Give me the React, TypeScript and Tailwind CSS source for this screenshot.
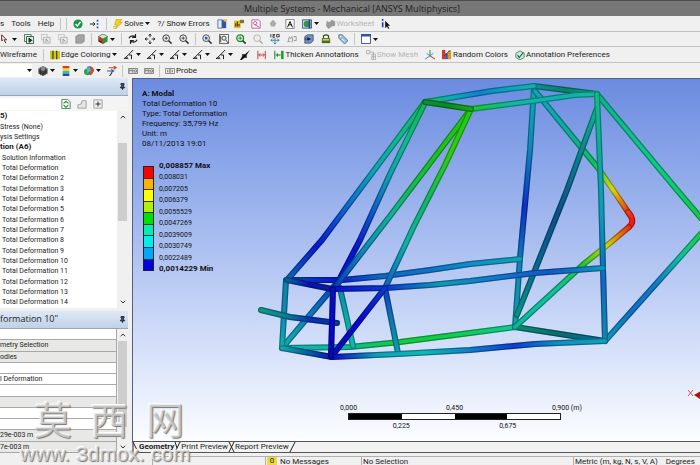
import type { ReactNode } from 'react'
import { Pin, ChevronUp, ChevronDown } from 'lucide-react'

const ICONS: Record<string, ReactNode> = {
  check: (
    <>
      <circle cx="6" cy="6" r="5.5" fill="#169447" />
      <path d="M3 6l2.200 2.500L9 3.500" stroke="#fff" strokeWidth="1.800" fill="none" />
    </>
  ),
  chain: (
    <>
      <path d="M0 6h6M4 4l2 2-2 2" stroke="#222" strokeWidth="1.200" fill="none" />
      <path d="M8 1h2v2H8zM8 5h2v2H8zM8 9h2v2H8z" fill="#2b4bd0" />
    </>
  ),
  bolt: (
    <>
      <path d="M4 0h7L8 4h3L3 12l2-5H2z" fill="#f4d413" stroke="#a99308" strokeWidth=".6" />
      <path d="M0 9h4M0 11h3" stroke="#d8b800" />
    </>
  ),
  sheet: (
    <>
      <path d="M1 1h5v10H1z" fill="#e6ecfa" stroke="#4466b0" />
      <path d="M6 1h5v10H6z" fill="#3155a8" />
      <path d="M8 0h4v3H8z" fill="#e6c84c" />
    </>
  ),
  chart: (
    <>
      <path d="M0 2h8v9H0z" fill="#e5bd20" />
      <path d="M2 9V5M4 9V3M6 9V6" stroke="#2c3a1c" strokeWidth="1.300" />
      <path d="M7 1h5v4H7z" fill="#82733a" />
    </>
  ),
  report: (
    <>
      <path d="M1 1h8l2 2v8H1z" fill="#fff" stroke="#b34a90" />
      <circle cx="5" cy="5" r="2" fill="none" stroke="#c33583" />
      <path d="M5 7l5 3" stroke="#c33583" />
    </>
  ),
  comment: <path d="M6 1l4 4-2 4H4L2 5z" fill="#a9a9a9" />,
  letter: (
    <>
      <path d="M1 .5h10v11H1z" fill="#fff" stroke="#777" />
      <path d="M3 10l3-7 3 7M4 7h4" stroke="#111" strokeWidth="1.200" fill="none" />
    </>
  ),
  image: (
    <>
      <path d="M.5 1h11v10H.5z" fill="#cbd9f3" stroke="#334766" />
      <circle cx="6" cy="6" r="4" fill="#2a9b45" />
      <path d="M9 1v10" stroke="#223c8a" strokeWidth="2" />
    </>
  ),
  worksheet: <path d="M1 2l3 2 3-3 4 2v5L7 9l-4 3-3-4z" fill="#9b9b9b" />,
  info: (
    <>
      <path d="M2 0v2M2 4v6" stroke="#2639d8" strokeWidth="2" />
      <path d="M5 2v9l2-2 2 3 1-1-2-3h3z" fill="#111" />
    </>
  ),
  cursor: <path d="M2 1l6 6H5l2 4M2 1v7l2-1" fill="none" stroke="#5b2d28" strokeWidth="1.200" />,
  selBox: (
    <>
      <path d="M.5 2.500V.5h8v2M.5 2.500V9h2" fill="none" stroke="#1c6d3a" />
      <path d="M3 3h8.500v8.500H3z" fill="#dff0e2" stroke="#1b4a30" />
      <path d="M6 5v5l3-2zM6 5l4 3" fill="#185e30" stroke="#111" />
    </>
  ),
  selFace: (
    <>
      <path d="M.5.5h7v3M.5.5V7h2" fill="none" stroke="#bbb" />
      <path d="M3 4h8v7H3z" fill="#e9e9e9" stroke="#aaa" />
      <path d="M6 6v4M6 6l3 3" stroke="#8c8c8c" />
    </>
  ),
  selBody: <path d="M1 3l3-2h7v8l-3 2H1z" fill="#a3a3a3" stroke="#8b8b8b" />,
  cube: (
    <>
      <path d="M6 0l5.500 3v6L6 12 .5 9V3z" fill="#229c34" />
      <path d="M6 0l5.500 3L6 6 .5 3z" fill="#d8e6d2" stroke="#35603a" strokeWidth=".7" />
      <path d="M.5 3L6 6v6L.5 9z" fill="#cd3a2c" />
      <path d="M1 8l4 2" stroke="#111" />
    </>
  ),
  rotate: <path d="M1 5q2-4 8-2M9 0v4H5M11 7q-2 4-8 2M3 12V8h4" fill="none" stroke="#222" strokeWidth="1.400" />,
  move: <path d="M6 0v4M6 8v4M0 6h4M8 6h4M4.500 2L6 0l1.500 2M4.500 10L6 12l1.500-2M2 4.500L0 6l2 1.500M10 4.500L12 6l-2 1.500" fill="none" stroke="#222" strokeWidth="1.100" />,
  zoomIn: (
    <>
      <circle cx="5" cy="5" r="4" fill="#edf3f1" stroke="#222" />
      <path d="M5 3v4M3 5h4" stroke="#333" />
      <path d="M8 8l3.500 3.500" stroke="#222" strokeWidth="1.800" />
    </>
  ),
  zoomFit: (
    <>
      <circle cx="5" cy="5" r="4" fill="#e3eaf3" stroke="#333" />
      <path d="M3.500 3.500h3v3h-3z" fill="#245c9b" />
      <path d="M8 8l3.500 3.500" stroke="#222" strokeWidth="1.800" />
    </>
  ),
  zoomBox: (
    <>
      <path d="M.5.500h11v11H.5z" fill="none" stroke="#444" />
      <circle cx="6" cy="5" r="2.500" fill="#dfe9ea" stroke="#333" />
      <path d="M8 7l3 4M2 2v8" stroke="#333" />
    </>
  ),
  zoomGreen: (
    <>
      <circle cx="5" cy="5" r="4" fill="#d6f2d5" stroke="#1c8b2e" strokeWidth="1.600" />
      <path d="M5 3v4M3 5h4" stroke="#1c6b2e" />
      <path d="M8 8l3.500 3.500" stroke="#154d20" strokeWidth="2" />
    </>
  ),
  zoomGray: (
    <>
      <circle cx="5" cy="5" r="4" fill="#eee" stroke="#aaa" />
      <path d="M8 8l3.500 3.500" stroke="#aaa" strokeWidth="1.800" />
    </>
  ),
  iso: (
    <>
      <path d="M1 0v4M3 .5h2.500v1.500H3.500v2H6M8 .5h3v3H8z" fill="none" stroke="#222" />
      <path d="M6 5v7M1 7.500h10M3 6L1 7.500 3 9M9 6l2 1.500L9 9M4.500 10.500L6 12l1.500-1.500" fill="none" stroke="#2878a8" />
    </>
  ),
  look: <path d="M1 10l2-7M4 6q1-4 3-2l-1 6M8 3h3v5H8M2 9h2" fill="none" stroke="#999" strokeWidth="1.200" />,
  eye: (
    <>
      <path d="M1 3l3-2h7v7l-3 3H1z" fill="#7095c9" stroke="#3a5275" />
      <path d="M1 6q3-3 7 0-3 3-7 0z" fill="#fff" stroke="#222" />
      <circle cx="5" cy="6" r="1.500" fill="#15213b" />
    </>
  ),
  lock: (
    <>
      <path d="M3 5V2q3-2 6 0v3" fill="none" stroke="#2d4d24" strokeWidth="1.400" />
      <path d="M1 5h10v6H1z" fill="#4a6b1c" />
      <path d="M2 6h8v2H2z" fill="#c6d050" />
    </>
  ),
  tag: (
    <>
      <path d="M1 1h4l7 7-4 4-7-7z" fill="#9bbfe0" stroke="#456a92" />
      <circle cx="3" cy="3" r="1" fill="#fff" />
      <path d="M5 6l3 3" stroke="#fff" />
    </>
  ),
  pane: (
    <>
      <path d="M.5.5h11v11H.5z" fill="#fff" stroke="#26365f" />
      <path d="M0 0h12v3H0z" fill="#33539b" />
    </>
  ),
  edges: (
    <>
      <path d="M0 1h12v10H0z" fill="#cfc71f" />
      <path d="M3.500 1v10M8 1v10" stroke="#3b4a12" strokeWidth="1.500" />
    </>
  ),
  slash: <path d="M0 11L11 0M3 8l2 3M6 6h3v5M0 10h4" stroke="#222" strokeWidth="1.200" fill="none" />,
  arrow: <path d="M0 12l3-5-1-2 4 0 6-5-4 6 0 4-2-1-4 3z" fill="#111" />,
  redGap: <path d="M1 1v10M10 1v10M2 6h7M4 4L2 6l2 2M7 4l2 2-2 2" stroke="#b84a4a" strokeWidth="1.200" fill="none" />,
  thicken: (
    <>
      <path d="M1 1v10M2 6h6M4 4v4" stroke="#1d7a2a" strokeWidth="1.200" />
      <path d="M10 1v10" stroke="#15a02a" strokeWidth="3" />
    </>
  ),
  mesh: <path d="M.5.5h4v4h-4zM7 5h4.500v6.500H7zM7 8h4.500M9 5v6M4.500 2.500H9V5" stroke="#aaa" fill="none" />,
  axes: (
    <>
      <path d="M6 7V0" stroke="#2ca23c" strokeWidth="1.300" />
      <path d="M6 7l6 4" stroke="#d03434" strokeWidth="1.300" />
      <path d="M6 7l-6 4M2 4l4 3 4-3" stroke="#2a8cb8" strokeWidth="1.100" fill="none" />
    </>
  ),
  random: (
    <>
      <path d="M0 0h4v11H0z" fill="#d03822" />
      <path d="M4 4h3v7H4z" fill="#2a4abf" />
      <path d="M7 1h4v10H7z" fill="#de9a17" />
      <path d="M3 7l7-7" stroke="#333" />
    </>
  ),
  prefs: (
    <>
      <path d="M1 4l5-3 5 3v5l-5 3-5-3z" fill="#cfeadb" stroke="#328160" />
      <path d="M3 6l2 3 5-6" fill="none" stroke="#1b5a3c" strokeWidth="1.300" />
    </>
  ),
  grayCube: (
    <>
      <path d="M6 0l5.500 3v6L6 12 .5 9V3z" fill="#4b4b4b" />
      <path d="M6 0l5.500 3L6 6 .5 3z" fill="#8a8a8a" />
      <path d="M3 2v9M6 6v6M9 2v8M1 6l5 3 5-3" stroke="#222" strokeWidth=".6" fill="none" />
    </>
  ),
  bands: (
    <>
      <path d="M2 0h8v3H2z" fill="#e23a20" />
      <path d="M2 3h8v3H2z" fill="#efd923" />
      <path d="M2 6h8v3H2z" fill="#2fc2a8" />
      <path d="M2 9h8v3H2z" fill="#2148d0" />
    </>
  ),
  ball: (
    <>
      <circle cx="4" cy="7" r="4" fill="#2ea33c" />
      <path d="M4 1q5-2 7 2t-3 8q-3-1-4-4z" fill="#2455c8" />
      <path d="M8 1q4 1 4 5l-4 5-2-3z" fill="#e04a25" />
      <path d="M3 3l4-2 1 5-4 3z" fill="#37c3c7" />
    </>
  ),
  vectors: (
    <>
      <path d="M2 2h9M8 0l3 2-3 2" stroke="#c74632" strokeWidth="1.300" fill="none" />
      <path d="M0 6h8M5 4l3 2-3 2" stroke="#3457b3" strokeWidth="1.300" fill="none" />
      <path d="M3 12l3-4" stroke="#333" strokeWidth="1.300" />
    </>
  ),
  maxTag: <path d="M.5 3h11v6H.5zM2 8V4l1.500 2L5 4v4M6 8V5h2v3M9 4l2 4M11 4L9 8" stroke="#777" fill="none" />,
  probe: <path d="M.5 3h11v6H.5zM3 4.500v3M5 4.500h2v3H5zM9 4.500v3" stroke="#777" fill="none" />,
  export: (
    <>
      <path d="M1 .5h7l3 3v8H1z" fill="#fff" stroke="#35743d" />
      <path d="M3 5l3-2 3 2M9 7l-3 3-3-3" stroke="#1f9331" strokeWidth="1.400" fill="none" />
    </>
  ),
  folder: <path d="M1 10V7l4-1 1-4h5v9H1z" fill="#e4e4e4" stroke="#999" />,
  plus: (
    <>
      <path d="M1 1h10v10H1z" fill="#eee" stroke="#999" />
      <path d="M6 3v6M3 6h6" stroke="#333" strokeWidth="1.200" />
    </>
  ),
}

function Icon({ name }: { name: string }) {
  return (
    <svg viewBox="0 0 12 12" className="w-[10px] h-[10px] shrink-0" aria-hidden="true">
      {ICONS[name]}
    </svg>
  )
}

function Caret() {
  return (
    <svg viewBox="0 0 5 3" className="w-[5px] h-[3px] shrink-0" aria-hidden="true">
      <path d="M0 0h5L2.500 3z" fill="#111" />
    </svg>
  )
}

function Tool({ icon, label, caret, off }: { icon?: string; label?: string; caret?: boolean; off?: boolean }) {
  return (
    <button
      type="button"
      aria-label={label ?? icon}
      disabled={off}
      className="flex items-center gap-px whitespace-nowrap disabled:text-[#b4b4b4]"
    >
      {icon && <Icon name={icon} />}
      {label && <span>{label}</span>}
      {caret && <span className="pl-px"><Caret /></span>}
    </button>
  )
}

function Sep() {
  return <span className="w-px h-3 -mx-px bg-[#c4c4c4] shrink-0" />
}

const BAR = 'flex items-center overflow-hidden border-b border-[#c2c2c2] bg-[#f0f0f0] shrink-0'

function Toolbars() {
  return (
    <header className="text-[8px] leading-3">
      <h1 className="h-4 pl-1 border-t border-[#4c4c4c] bg-[#777] text-center font-['Open_Sans',sans-serif] text-[9px] leading-[15px] font-normal text-[#222]">
        Multiple Systems - Mechanical [ANSYS Multiphysics]
      </h1>
      <nav className={`${BAR} h-4 gap-[7px]`}>
        <Tool label="s" />
        <Tool label="Tools" />
        <Tool label="Help" />
        <Sep />
        <Sep />
        <Tool icon="check" />
        <Tool icon="chain" />
        <Sep />
        <Tool icon="bolt" label="Solve" caret />
        <Tool label="?/ Show Errors" />
        <Tool icon="sheet" />
        <Tool icon="chart" />
        <Tool icon="report" />
        <Tool icon="comment" off />
        <Tool icon="letter" />
        <Tool icon="image" caret />
        <Tool icon="worksheet" label="Worksheet" off />
        <Tool icon="info" />
      </nav>
      <div className={`${BAR} h-[15px] gap-[7px]`}>
        <Tool icon="cursor" caret />
        <Tool icon="selBox" />
        <Tool icon="selFace" off />
        <Tool icon="selFace" off />
        <Tool icon="selBody" off />
        <Sep />
        <Tool icon="cube" caret />
        <Sep />
        <Tool icon="rotate" />
        <Tool icon="move" />
        <Tool icon="zoomIn" />
        <Tool icon="zoomIn" />
        <Sep />
        <Tool icon="zoomFit" />
        <Tool icon="zoomBox" />
        <Tool icon="zoomGreen" />
        <Tool icon="zoomGray" off />
        <Tool icon="iso" />
        <Tool icon="look" off />
        <Tool icon="eye" />
        <Tool icon="lock" />
        <Tool icon="tag" />
        <Sep />
        <Tool icon="pane" caret />
      </div>
      <div className={`${BAR} h-4 gap-[7px]`}>
        <Tool label="Wireframe" />
        <Sep />
        <Tool icon="edges" label="Edge Coloring" caret />
        <div className="flex gap-[6px]">
          {[0, 1, 2, 3, 4].map(i => (
            <Tool key={i} icon="slash" caret />
          ))}
        </div>
        <Tool icon="arrow" />
        <Tool icon="redGap" />
        <Tool icon="thicken" label="Thicken Annotations" />
        <Tool icon="mesh" label="Show Mesh" off />
        <Tool icon="axes" />
        <Tool icon="random" label="Random Colors" />
        <Tool icon="prefs" label="Annotation Preferences" />
      </div>
      <div className="flex items-center h-[15px] gap-[6px] bg-[#f0f0ee]">
        <span className="flex items-center justify-end w-8 h-[13px] bg-white">
          <Caret />
        </span>
        <Tool icon="grayCube" caret />
        <Tool icon="bands" caret />
        <Tool icon="ball" caret />
        <Tool icon="vectors" />
        <Sep />
        <Tool icon="maxTag" />
        <Tool icon="maxTag" />
        <Sep />
        <Tool icon="probe" label="Probe" />
      </div>
    </header>
  )
}

const TREE = [
  'Solution Information',
  'Total Deformation',
  ...Array.from({ length: 13 }, (_, i) => `Total Deformation ${i + 2}`),
]

const DETAILS = [
  { text: '', head: false },
  { text: 'metry Selection', head: true },
  { text: 'odies', head: true },
  { text: '', head: false },
  { text: 'l Deformation', head: false },
  { text: '', head: false },
  { text: '', head: true },
  { text: '', head: false },
  { text: '', head: false },
  { text: '29e-003 m', head: true },
  { text: '7e-003 m', head: true },
]

function Scroll({ children }: { children: ReactNode }) {
  return (
    <div className="flex flex-col items-center w-[11px] shrink-0 bg-[#f0f0f0] text-[#333]">
      <ChevronUp className="w-2 h-3" strokeWidth={3} />
      {children}
      <ChevronDown className="w-2 h-3" strokeWidth={3} />
    </div>
  )
}

function PanelHead({ title }: { title: string }) {
  return (
    <div className="flex items-center justify-between h-[18px] shrink-0 pr-[2px] border-b border-[#9aa6b5] bg-linear-to-b from-[#dfe9f5] to-[#bed1e8]">
      <h2 className="font-['Open_Sans',sans-serif] text-[9px] leading-4 text-[#222]">{title}</h2>
      <Pin className="w-[7px] h-[7px] text-[#111]" strokeWidth={3} fill="#556" />
    </div>
  )
}

function Sidebar() {
  return (
    <aside className="flex flex-col w-[128px] shrink-0 text-[7px] leading-[10px] text-[#222]">
      <PanelHead title="" />
      <div className="flex items-center h-[15px] shrink-0 bg-[#f4f4f4]">
        <span className="w-[61px] h-3 bg-white" />
        <div className="flex gap-[6px]">
          <Tool icon="export" />
          <Tool icon="folder" />
          <Tool icon="plus" />
        </div>
      </div>
      <div className="flex flex-[196] min-h-0 bg-white">
        <ul className="flex flex-col flex-1 min-w-0 whitespace-nowrap *:flex *:flex-1 *:items-center">
          <li className="text-[8px] font-bold">5)</li>
          <li>Stress (None)</li>
          <li>ysis Settings</li>
          <li className="text-[8px] font-bold">tion (A6)</li>
          {TREE.map(name => (
            <li key={name} className="pl-[2px]">{name}</li>
          ))}
        </ul>
        <Scroll>
          <span className="w-full h-5" />
          <span className="w-[9px] h-[78px] mb-auto bg-[#cdcdcd]" />
        </Scroll>
      </div>
      <div className="h-[3px] shrink-0 bg-[#f0f0f0]" />
      <PanelHead title={'formation 10"'} />
      <div className="flex flex-[124] min-h-0 bg-white">
        <table className="flex-1 h-full border-collapse">
          <tbody>
            {DETAILS.map((row, i) => (
              <tr key={i} className={row.head ? 'bg-[#e8e8e6]' : 'bg-white'}>
                <td className="p-0 h-[11px] border-b border-r border-[#a8a8a8] whitespace-nowrap">{row.text}</td>
              </tr>
            ))}
          </tbody>
        </table>
        <Scroll>
          <span className="w-[9px] h-[86px] mb-auto bg-[#cdcdcd]" />
        </Scroll>
      </div>
    </aside>
  )
}

// Tube centre lines and the colours along them, back to front
const TUBES: { d: string; from: number[]; to: number[]; stops: string[] }[] = [
  { d: 'M282 348L350 347L400 342L470 333L515 327', from: [282, 348], to: [515, 327], stops: ['#12b5b0', '#10b5a0', '#12cc40', '#10cc50', '#10c896'] },
  { d: 'M515 327L605 341', from: [515, 327], to: [605, 341], stops: ['#0a8a74', '#0a6b70', '#0b6796'] },
  { d: 'M534 87L530 150L524 215L520 258L515 327', from: [534, 87], to: [515, 327], stops: ['#10a8b0', '#1288b8', '#0b30c8', '#1083b8', '#10a0a8'] },
  { d: 'M535 91L598 168L620 200L630 215', from: [535, 91], to: [630, 215], stops: ['#12a4b8', '#10a8b0', '#10b090', '#10c060', '#d8d810', '#f02010'] },
  { d: 'M628 212Q636 221 629 227', from: [628, 212], to: [632, 228], stops: ['#e84010', '#ff1810', '#f02010'] },
  { d: 'M629 227L610 243L585 263L515 327', from: [630, 226], to: [515, 327], stops: ['#f02810', '#c8d810', '#20c830', '#12c090', '#10c0a0', '#10b49c'] },
  { d: 'M597 108L567 190L517 315', from: [597, 108], to: [517, 315], stops: ['#10b090', '#0c7c90', '#0a5088', '#0a6590', '#0a9088'] },
  { d: 'M534 86L597 94', from: [534, 86], to: [597, 94], stops: ['#0a9090', '#0a8068', '#10a078'] },
  { d: 'M597 94L677 190L706 224', from: [597, 94], to: [706, 224], stops: ['#10b090', '#10c090', '#10cc80', '#10c840'] },
  { d: 'M706 228L605 341', from: [706, 228], to: [605, 341], stops: ['#20d030', '#12c0a0', '#1278c8', '#1070c0', '#1098b8'] },
  { d: 'M287 280L342 280L385 276L430 270L470 264L520 259', from: [287, 280], to: [520, 259], stops: ['#0a50b0', '#0818d0', '#1068c0', '#1070c8', '#1090c8', '#10a0b8'] },
  { d: 'M425 102L492 91L534 86', from: [425, 102], to: [534, 86], stops: ['#10c060', '#10a8b8', '#1080d0', '#10a0c0', '#10b0b0'] },
  { d: 'M471 109L540 100L575 95L597 94', from: [471, 109], to: [597, 94], stops: ['#18c830', '#10b8a0', '#10b0b0', '#10b8a0'] },
  { d: 'M597 94L601 190L603 268L605 341', from: [597, 94], to: [605, 341], stops: ['#12bc88', '#10a8a0', '#1098b8', '#1068c0', '#1288b8'] },
  { d: 'M340 288L353 346', from: [340, 288], to: [353, 346], stops: ['#1088a8', '#10a8a8', '#10b8a8'] },
  { d: 'M336 284L282 348', from: [336, 284], to: [282, 348], stops: ['#0c40c0', '#107cbc', '#12b0a8'] },
  { d: 'M287 280L322 240L390 149L425 102', from: [287, 280], to: [425, 102], stops: ['#1068b0', '#0818d0', '#1060d0', '#10a0b8', '#10b890', '#10b860'] },
  { d: 'M336 286L360 240L390 174L425 103', from: [336, 286], to: [425, 103], stops: ['#0818c8', '#0814d0', '#1058c8', '#10a0b0', '#10b890', '#10b850'] },
  { d: 'M471 109L390 216L336 286', from: [471, 109], to: [336, 286], stops: ['#20c818', '#20c020', '#18bc40', '#10b098', '#1088b8', '#0a40c0'] },
  { d: 'M471 109L445 165L414 226L385 288', from: [471, 109], to: [385, 288], stops: ['#20cc10', '#30cc10', '#10b860', '#10b0a8', '#1060c8'] },
  { d: 'M425 102L471 109', from: [425, 102], to: [471, 109], stops: ['#0a9038', '#0c8820', '#14a818'] },
  { d: 'M286 280L282 348', from: [286, 280], to: [282, 348], stops: ['#1080b0', '#1088b0', '#10b0b0'] },
  { d: 'M287 280L332 289', from: [287, 280], to: [332, 289], stops: ['#0c60a0', '#0810b0', '#0820a0'] },
  { d: 'M332 289L385 288L430 285L470 281L535 273L603 268', from: [332, 289], to: [603, 268], stops: ['#0810c8', '#0c38d0', '#1098b8', '#1078c8', '#1058c8', '#1098c0'] },
  { d: 'M385 288L398 353', from: [385, 288], to: [398, 353], stops: ['#0c40c8', '#1078b0', '#10a0b0'] },
  { d: 'M385 288L332 356', from: [385, 288], to: [332, 356], stops: ['#0c38d0', '#0808c8', '#0810c0'] },
  { d: 'M282 348L332 357', from: [282, 348], to: [332, 357], stops: ['#10a8b0', '#0860a0', '#0818b0'] },
  { d: 'M332 357L398 354L470 350L535 344L605 341', from: [332, 357], to: [605, 341], stops: ['#0808c8', '#10a0b8', '#10b8b8', '#1080c8', '#0c40d0', '#1090c0', '#10a0c0'] },
  { d: 'M261 310L290 317L337 323', from: [261, 310], to: [337, 323], stops: ['#109888', '#0c7c98', '#0830b0', '#0838a0'] },
  { d: 'M333 289L331 356', from: [333, 289], to: [331, 356], stops: ['#0810b8', '#0808c8', '#0808b0'] },
]

function Frame() {
  return (
    <svg viewBox="132 79 568 362" preserveAspectRatio="xMaxYMin slice" className="block w-full h-full" aria-label="Deformed frame">
      <defs>
        {TUBES.map((t, i) => (
          <linearGradient
            key={i}
            id={`tube${i}`}
            gradientUnits="userSpaceOnUse"
            x1={t.from[0]}
            y1={t.from[1]}
            x2={t.to[0]}
            y2={t.to[1]}
          >
            {t.stops.map((c, j) => (
              <stop key={j} offset={j / (t.stops.length - 1)} stopColor={c} />
            ))}
          </linearGradient>
        ))}
      </defs>
      {TUBES.map((t, i) => (
        <g key={i} fill="none" strokeLinecap="round" strokeLinejoin="round">
          <path d={t.d} stroke={`url(#tube${i})`} strokeWidth="6" />
          <path d={t.d} stroke="#000" strokeOpacity=".3" strokeWidth="6" />
          <path d={t.d} stroke={`url(#tube${i})`} strokeWidth="3.500" />
        </g>
      ))}
      <path d="M694 395l6-3.500v7.500z" fill="#b01010" />
      <path d="M688 390l5 6M693 390l-5 6" stroke="#e05050" />
    </svg>
  )
}

const LEGEND = [
  { color: 'bg-[#ff0000]', value: '0,008031' },
  { color: 'bg-[#ffb000]', value: '0,007205' },
  { color: 'bg-[#ffff00]', value: '0,006379' },
  { color: 'bg-[#b0f000]', value: '0,0055529' },
  { color: 'bg-[#00e000]', value: '0,0047269' },
  { color: 'bg-[#00eeb0]', value: '0,0039009' },
  { color: 'bg-[#00eef0]', value: '0,0030749' },
  { color: 'bg-[#00a8f8]', value: '0,0022489' },
  { color: 'bg-[#0000e0]', value: '0,0014229 Min' },
]

function Viewport() {
  return (
    <main className="relative flex-1 min-h-0 overflow-hidden border-t border-l border-[#56627c] bg-linear-to-b from-[#6b8be0] to-[#fcfdff] text-[#111]">
      <Frame />
      <div className="absolute left-[9px] top-[10px] text-[8px] leading-[10px]">
        <p className="font-bold">A: Modal</p>
        <p>Total Deformation 10</p>
        <p>Type: Total Deformation</p>
        <p>Frequency: 35,799 Hz</p>
        <p>Unit: m</p>
        <p>08/11/2013 19:01</p>
      </div>
      <div className="absolute left-[10px] top-[87px] flex gap-[5px] text-[7px]">
        <div className="flex flex-col h-[105px] w-[11px] border border-[#222] divide-y divide-[#333]">
          {LEGEND.map(l => (
            <span key={l.value} className={`flex-1 ${l.color}`} />
          ))}
        </div>
        <div className="flex flex-col justify-between -my-[5px] h-[113px] leading-[10px]">
          <strong className="text-[8px]">0,008857 Max</strong>
          {LEGEND.map((l, i) =>
            i === LEGEND.length - 1 ? (
              <strong key={i} className="text-[8px]">{l.value}</strong>
            ) : (
              <span key={i}>{l.value}</span>
            )
          )}
        </div>
      </div>
      <div className="absolute left-[207px] bottom-[10px] w-[229px] text-[7px] leading-[10px]">
        <div className="flex justify-between">
          <span className="w-[18px]">0,000</span>
          <span className="w-[18px]">0,450</span>
          <span className="w-[17px] whitespace-nowrap">0,900 (m)</span>
        </div>
        <div className="grid grid-cols-4 h-[7px] mx-2 border border-[#222] *:odd:bg-black *:even:bg-white">
          <span />
          <span />
          <span />
          <span />
        </div>
        <div className="flex justify-around pt-px px-2">
          <span>0,225</span>
          <span>0,675</span>
        </div>
      </div>
    </main>
  )
}

function TabEdge({ d }: { d: string }) {
  return (
    <svg viewBox="0 0 7 10" className="w-[7px] h-[10px] shrink-0" aria-hidden="true">
      <path d={d} stroke="#222" fill="none" />
    </svg>
  )
}

function Tabs() {
  return (
    <div role="tablist" className="flex items-center h-[12px] shrink-0 border-t border-b border-[#555] bg-[#f2f2f2] text-[8px] leading-[10px]">
      <TabEdge d="M1 0v10M1 0l5 10" />
      <button role="tab" type="button" aria-selected="true" className="font-bold">Geometry</button>
      <TabEdge d="M6 0L1 10M1 0l2 6" />
      <button role="tab" type="button" aria-selected="false">Print Preview</button>
      <TabEdge d="M6 0L1 10M1 0l5 10" />
      <button role="tab" type="button" aria-selected="false">Report Preview</button>
      <TabEdge d="M6 0L1 10" />
    </div>
  )
}

function StatusBar() {
  const cell = 'h-3 border-t border-l border-[#b0b0b0] px-px'
  return (
    <footer className="flex h-[12px] pt-[3px] shrink-0 overflow-hidden bg-[#f0f0f0] text-[8px] leading-[10px] text-[#222] whitespace-nowrap">
      <span className="w-[152px] shrink-0" />
      <span className={`${cell} w-[113px] shrink-0`} />
      <span className={`${cell} flex gap-[3px] w-[96px] shrink-0`}>
        <span className="w-[10px] h-2 bg-[#f0d840] text-center leading-2">0</span>
        No Messages
      </span>
      <span className={`${cell} flex-1`}>No Selection</span>
      <span className={`${cell} flex gap-2 w-[127px] shrink-0`}>
        <span>Metric (m, kg, N, s, V, A)</span>
        <span>Degrees</span>
      </span>
    </footer>
  )
}

function Watermark() {
  return (
    <div className="absolute left-5 bottom-0 pointer-events-none select-none text-[#e4e4e4]/70 [text-shadow:1px_1px_1px_#777,-1px_-1px_0_#fff,0_0_1px_#888]">
      <p className="flex gap-[18px] pl-[14px] font-['Liberation_Sans','Noto_Sans_CJK_SC',sans-serif] text-[38px] leading-[42px]">
        <span>莫</span>
        <span>西</span>
        <span>网</span>
      </p>
      <p className="font-['Liberation_Sans',sans-serif] text-[21px] leading-[23px]">www. 3dmox. com</p>
    </div>
  )
}

export default function App() {
  return (
    <div className="relative flex flex-col h-screen overflow-hidden bg-[#f0f0f0] font-['Roboto',sans-serif] text-[#222]">
      <Toolbars />
      <div className="flex flex-1 min-h-0 gap-1">
        <Sidebar />
        <div className="flex flex-col flex-1 min-w-0">
          <Viewport />
          <Tabs />
        </div>
      </div>
      <StatusBar />
      <Watermark />
    </div>
  )
}
